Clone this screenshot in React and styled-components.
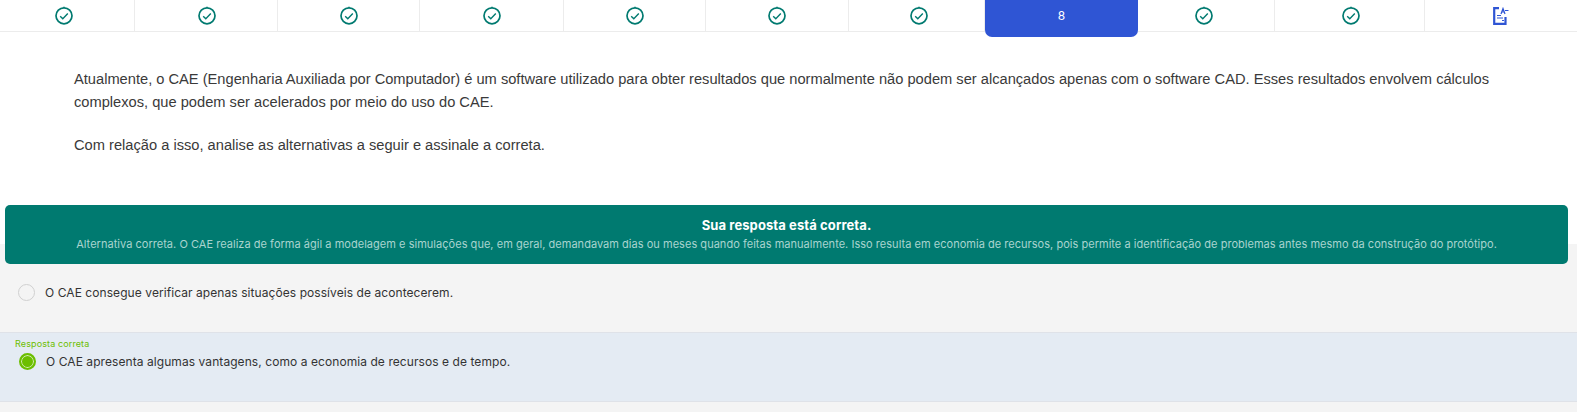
import React from "react";
import styled, { createGlobalStyle } from "styled-components";

const GlobalStyle = createGlobalStyle`
  html, body {
    margin: 0;
    padding: 0;
    background: #fff;
  }
  body {
    font-family: Inter, Roboto, "Liberation Sans", sans-serif;
  }
`;

const steps = [
  { w: 135, left: -3 },
  { w: 143, left: 1 },
  { w: 142, left: 0 },
  { w: 144, left: 0 },
  { w: 142, left: 0 },
  { w: 143, left: 0 },
  { w: 136, left: 2 },
  { w: 153, active: true, label: "8" },
  { w: 137, left: -2 },
  { w: 150, left: 1 },
  { w: 152, review: true, left: 0 },
];

function CheckIcon() {
  return (
    <svg width="18" height="19" viewBox="0 0 18 19" fill="none" stroke="#007a70">
      <circle cx="9" cy="9.8" r="8" strokeWidth="1.7" />
      <path d="M9 0.6v1.4" strokeWidth="1" />
      <path d="M5.2 10.2l2.6 2.6 5-5.2" strokeWidth="1.4" />
    </svg>
  );
}

function ReviewIcon() {
  return (
    <svg width="16" height="18" viewBox="0 0 16 18" fill="none" stroke="#2f55d4">
      <path d="M6 1.2H1.2v15.6h11.3V10" strokeWidth="2.2" />
      <path d="M4 8.5h4M4 11h6M9 13.5h2" strokeWidth="1.2" />
      <path d="M8 7l2-5.5 2 5.5M9 5h2M12 3.5h3.5" strokeWidth="1.2" />
    </svg>
  );
}

function App() {
  return (
    <Page>
      <GlobalStyle />
      <Steps>
        {steps.map((step, i) => (
          <Step key={i} $w={step.w} $left={step.left} $active={step.active}>
            {step.active ? step.label : step.review ? <ReviewIcon /> : <CheckIcon />}
          </Step>
        ))}
      </Steps>
      <Question>
        <p>
          Atualmente, o CAE (Engenharia Auxiliada por Computador) é um software utilizado para obter resultados que normalmente não podem ser alcançados apenas com o software CAD. Esses resultados envolvem cálculos complexos, que podem ser acelerados por meio do uso do CAE.
        </p>
        <p>Com relação a isso, analise as alternativas a seguir e assinale a correta.</p>
      </Question>
      <Feedback>
        <h4>Sua resposta está correta.</h4>
        <p>
          Alternativa correta. O CAE realiza de forma ágil a modelagem e simulações que, em geral, demandavam dias ou meses quando feitas manualmente. Isso resulta em economia de recursos, pois permite a identificação de problemas antes mesmo da construção do protótipo.
        </p>
      </Feedback>
      <Options>
        <Option>
          <Radio />
          <span>O CAE consegue verificar apenas situações possíveis de acontecerem.</span>
        </Option>
        <Option $correct>
          <CorrectLabel>Resposta correta</CorrectLabel>
          <Radio $checked />
          <span>O CAE apresenta algumas vantagens, como a economia de recursos e de tempo.</span>
        </Option>
      </Options>
    </Page>
  );
}

const Page = styled.div`
  width: 1577px;
  height: 412px;
  overflow: hidden;
`;
const Steps = styled.div`
  display: flex;
  height: 31px;
  border-bottom: 1px solid #ececec;
`;
const Step = styled.div`
  flex: 0 0 ${(p) => p.$w}px;
  box-sizing: border-box;
  display: flex;
  align-items: center;
  justify-content: center;
  padding-left: ${(p) => Math.max(p.$left || 0, 0) * 2}px;
  padding-right: ${(p) => Math.max(-(p.$left || 0), 0) * 2}px;
  border-right: 1px solid #ececec;
  height: ${(p) => (p.$active ? "37px" : "31px")};
  font-size: 12px;
  &:last-child {
    border-right: none;
  }
  ${(p) =>
    p.$active &&
    `
    background: #2f55d4;
    color: #fff;
    border: none;
    border-radius: 0 0 7px 7px;
    padding-bottom: 6px;
  `}
`;
const Question = styled.div`
  padding: 36px 60px 0 74px;
  height: 173px;
  box-sizing: border-box;
  font-family: "Liberation Sans", Arial, sans-serif;
  font-size: 14.67px;
  line-height: 23px;
  color: #3a3a3a;
  p {
    margin: 0 0 20px;
  }
`;
const Feedback = styled.div`
  position: relative;
  margin: 0 9px -20px 5px;
  height: 59px;
  box-sizing: border-box;
  padding-top: 12px;
  background: #007a70;
  border-radius: 5px;
  color: #fff;
  text-align: center;
  h4 {
    margin: 0;
    font-size: 13px;
    line-height: 17px;
    font-weight: 700;
    letter-spacing: 0.1px;
  }
  p {
    margin: 3px 0 0;
    font-size: 11px;
    line-height: 15px;
    letter-spacing: 0.03px;
    color: #a9d4cf;
  }
`;
const Options = styled.div`
  background: #f4f4f4;
  padding-top: 20px;
  height: 168px;
  box-sizing: border-box;
`;
const Option = styled.div`
  position: relative;
  display: flex;
  align-items: flex-start;
  gap: 10px;
  box-sizing: border-box;
  height: ${(p) => (p.$correct ? "70px" : "68px")};
  padding: ${(p) => (p.$correct ? "20px 0 0 19px" : "20px 0 0 18px")};
  background: ${(p) => (p.$correct ? "#e4ebf3" : "transparent")};
  font-size: 12px;
  line-height: 17px;
  letter-spacing: 0.07px;
  color: #333;
  ${(p) =>
    p.$correct &&
    `
    border-top: 1px solid #dfe2e8;
    border-bottom: 1px solid #dfe2e8;
  `}
`;
const CorrectLabel = styled.div`
  position: absolute;
  left: 15px;
  top: 5px;
  font-size: 9px;
  line-height: 12px;
  letter-spacing: 0.12px;
  color: #6cbe00;
`;
const Radio = styled.div`
  flex: none;
  box-sizing: border-box;
  width: 17px;
  height: 17px;
  border-radius: 50%;
  ${(p) =>
    p.$checked
      ? `
    background: #6cbe00;
    border: 2px solid #6cbe00;
    box-shadow: inset 0 0 0 1px #d9eec0;
  `
      : `
    background: #f4f4f4;
    border: 1px solid #d0d0d0;
  `}
`;

export default App;
